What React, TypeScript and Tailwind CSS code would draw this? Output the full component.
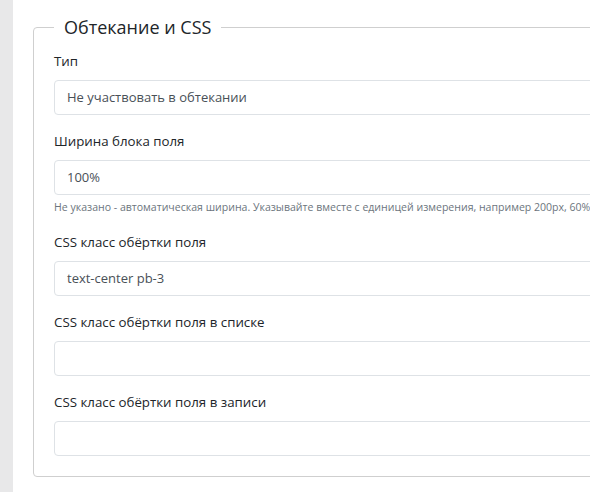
const fields = [
  { label: 'Тип', value: 'Не участвовать в обтекании' },
  {
    label: 'Ширина блока поля',
    value: '100%',
    help: 'Не указано - автоматическая ширина. Указывайте вместе с единицей измерения, например 200px, 60%',
  },
  { label: 'CSS класс обёртки поля', value: 'text-center pb-3' },
  { label: 'CSS класс обёртки поля в списке', value: '' },
  { label: 'CSS класс обёртки поля в записи', value: '' },
];

export default function App() {
  return (
    <div className="w-[590px] h-[492px] overflow-hidden flex bg-white font-['Open_Sans',sans-serif]">
      <div className="w-[13px] shrink-0 bg-[#e8e8e9]" />
      <div className="flex-1 pl-5 pt-[15px]">
        <fieldset className="w-[700px] border border-[#cfcfcf] rounded px-5 pb-5">
          <legend className="px-2.5 text-[18px] leading-6 text-[#212529]">Обтекание и CSS</legend>
          <div className="pt-3">
            {fields.map((f) => (
              <div key={f.label} className="mb-4 last:mb-0">
                <label className="block text-[13.3px] leading-[21px] text-[#212529] mb-2">{f.label}</label>
                <div className="h-[35px] border border-[#dee2e6] rounded bg-white px-3 flex items-center text-[13px] text-[#495057]">
                  {f.value}
                </div>
                {f.help && (
                  <div className="mt-[3px] text-[10.55px] leading-[18px] text-[#6c757d] whitespace-nowrap">{f.help}</div>
                )}
              </div>
            ))}
          </div>
        </fieldset>
      </div>
    </div>
  );
}
